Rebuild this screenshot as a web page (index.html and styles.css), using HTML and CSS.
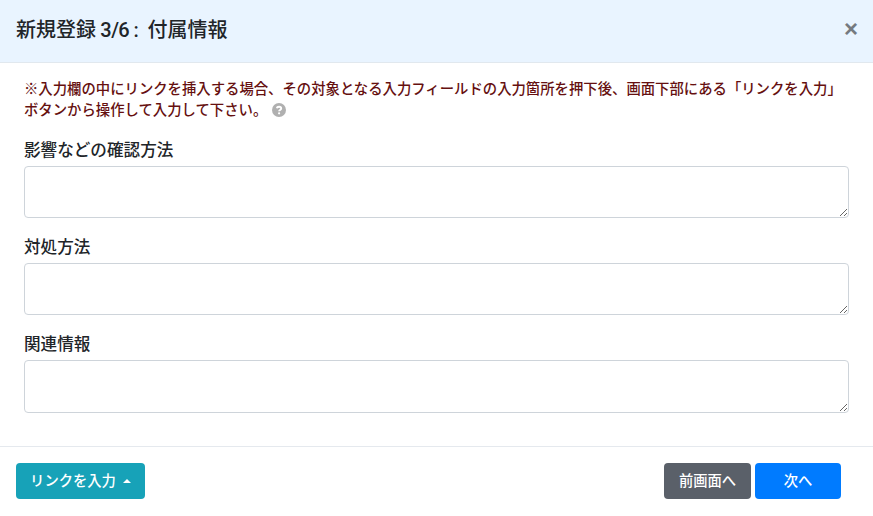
FILE: index.html
```html
<!DOCTYPE html>
<html lang="ja">
<head>
    <meta charset="UTF-8">
    <meta name="viewport" content="width=device-width, initial-scale=1.0">
    <title>新規登録</title>
    <link rel="stylesheet" href="styles.css">
</head>
<body>
    <main class="modal">
        <header class="modal-header">
            <h1 class="modal-title">新規登録<span class="step-number"> 3/6 : </span>付属情報</h1>
            <button class="close" type="button" aria-label="閉じる">×</button>
        </header>
        <form class="modal-body">
            <p class="notice">
                ※入力欄の中にリンクを挿入する場合、その対象となる入力フィールドの入力箇所を押下後、画面下部にある「リンクを入力」<br>ボタンから操作して入力して下さい。
                <svg class="help" viewBox="0 0 14 14">
                    <circle cx="7" cy="7" r="7"/>
                    <path d="M4.8 5.3C5.2 3.2 9.2 3.2 9.2 5.5C9.2 7 7.1 7 7.1 8.3"/>
                    <circle class="help-dot" cx="7.1" cy="10.3" r="1.1"/>
                </svg>
            </p>
            <div class="form-group">
                <label for="check">影響などの確認方法</label>
                <textarea id="check"></textarea>
            </div>
            <div class="form-group">
                <label for="action">対処方法</label>
                <textarea id="action"></textarea>
            </div>
            <div class="form-group">
                <label for="related">関連情報</label>
                <textarea id="related"></textarea>
            </div>
        </form>
        <footer class="modal-footer">
            <button class="btn btn-info" type="button">リンクを入力<span class="caret"></span></button>
            <div class="steps">
                <button class="btn btn-secondary" type="button">前画面へ</button>
                <button class="btn btn-primary" type="button">次へ</button>
            </div>
        </footer>
    </main>
</body>
</html>
```
FILE: styles.css
```css
* {
    box-sizing: border-box;
}

body {
    margin: 0;
    font-family: Roboto, "Noto Sans CJK JP", sans-serif;
    font-size: 14px;
    line-height: 1.5;
    color: #212529;
    background-color: #fff;
}

.modal {
    height: 516px;
    display: flex;
    flex-direction: column;
}

.modal-header {
    height: 63px;
    padding: 0 16px;
    display: flex;
    justify-content: space-between;
    flex-shrink: 0;
    background-color: #e9f4ff;
    border-bottom: 1px solid #e1e8ee;
}

.modal-title {
    margin: 15px 0 0;
    font-size: 20px;
    font-weight: 500;
}

.step-number {
    margin-right: 5px;
    letter-spacing: -0.6px;
}

.close {
    height: 30px;
    margin-top: 14px;
    margin-right: -1px;
    padding: 0;
    border: none;
    font-size: 24px;
    font-weight: 700;
    line-height: 30px;
    color: #757a80;
    background: none;
}

.modal-body {
    flex: 1;
    padding: 16px 24px 0;
}

.notice {
    margin: 0 0 16px;
    font-size: 14.36px;
    font-weight: 500;
    line-height: 21px;
    color: #661010;
    white-space: nowrap;
}

.help {
    width: 14px;
    height: 14px;
    margin-left: 1px;
    vertical-align: -2px;
    fill: #b0b0b0;
}

.help path {
    fill: none;
    stroke: #fff;
    stroke-width: 1.9;
}

.help .help-dot {
    fill: #fff;
}

.form-group {
    height: 97px;
}

label {
    display: block;
    margin-bottom: 3px;
    padding-top: 2px;
    font-size: 16.6px;
    font-weight: 500;
    line-height: 24px;
}

textarea {
    display: block;
    width: 100%;
    height: 52px;
    padding: 0;
    border: 1px solid #ced4da;
    border-radius: 4px;
    resize: vertical;
}

.form-group:last-child textarea {
    height: 53px;
}

.modal-footer {
    height: 70px;
    padding: 16px;
    display: flex;
    justify-content: space-between;
    border-top: 1px solid #e5e9ee;
}

.steps {
    display: flex;
    gap: 4px;
    margin-right: 16px;
}

.btn {
    width: 86px;
    height: 36px;
    padding: 0 0 3px;
    border: none;
    border-radius: 4px;
    font-family: inherit;
    font-size: 14.3px;
    font-weight: 500;
    color: #fff;
}

.btn-info {
    width: 129px;
    background-color: #17a2b8;
}

.btn-secondary {
    width: 87px;
    background-color: #5a6069;
}

.btn-primary {
    background-color: #007bff;
}

.caret {
    display: inline-block;
    margin-left: 7px;
    vertical-align: 3px;
    border: 4px solid transparent;
    border-top: 0;
    border-bottom-color: #fff;
}
```
